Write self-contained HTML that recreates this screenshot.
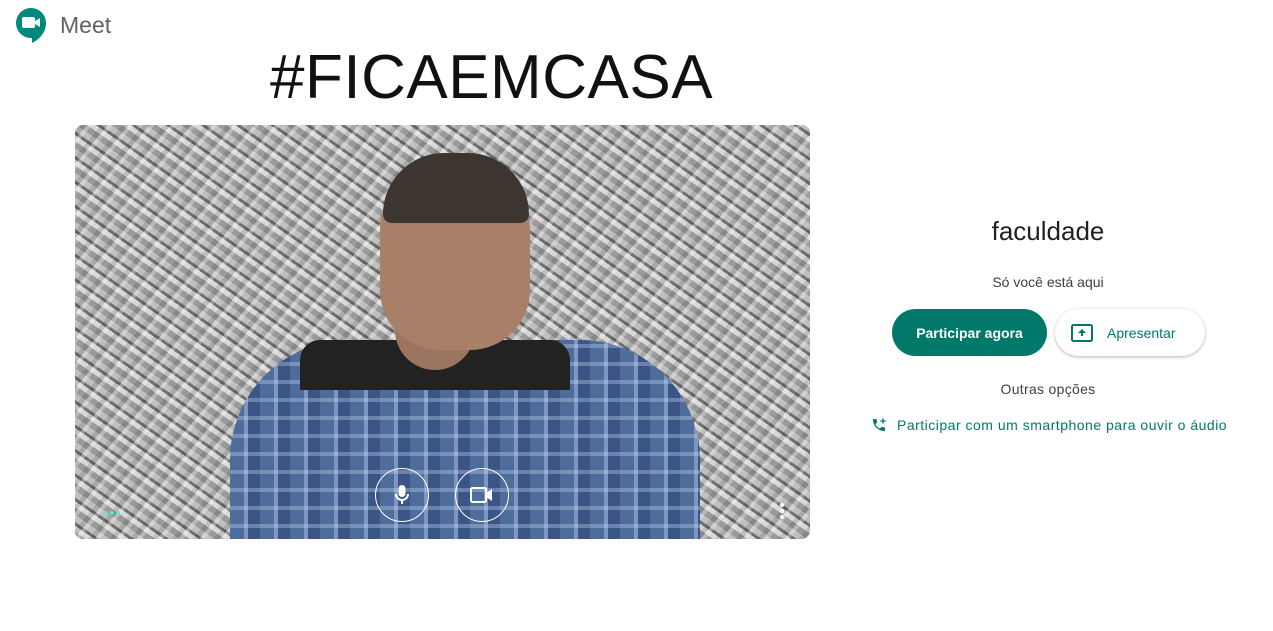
<!DOCTYPE html>
<html><head><meta charset="utf-8">
<style>
body{margin:0;width:1273px;height:631px;background:#fff;font-family:"Liberation Sans",sans-serif;position:relative;overflow:hidden}
.abs{position:absolute}
.video{left:75px;top:125px;width:735px;height:414px;border-radius:8px;overflow:hidden;
background:repeating-linear-gradient(35deg,#9a9a9a 0 6px,#d8d8d8 6px 11px,#707070 11px 14px,#c0c0c0 14px 20px),#a5a5a5}
.video:before{content:"";position:absolute;inset:0;background:repeating-linear-gradient(-50deg,rgba(255,255,255,.3) 0 4px,rgba(0,0,0,.12) 4px 9px,transparent 9px 16px)}
.btnc{width:54px;height:54px;border:1.5px solid #fff;border-radius:50%;box-sizing:border-box;display:flex;align-items:center;justify-content:center}
.d{width:4px;height:4px;border-radius:50%;display:inline-block;margin-right:2px}
</style></head><body>
<svg class="abs" style="left:15px;top:7px" width="32" height="36" viewBox="0 0 32 36">
<path d="M16 1a15 15 0 1 0 0 30h1v5c8-4 14-11 14-20A15 15 0 0 0 16 1z" fill="#00897b"/>
<rect x="7" y="10" width="13" height="11" rx="2" fill="#fff"/><path d="M20 14l5-3v9l-5-3z" fill="#fff"/>
</svg>
<div class="abs" style="left:60px;top:12px;font-size:23px;color:#5f6368">Meet</div>
<div class="abs" style="left:270px;top:42px;font-size:62px;color:#111;letter-spacing:0.5px">#FICAEMCASA</div>
<div class="abs video">
 <div class="abs" style="left:155px;top:215px;width:470px;height:220px;background:repeating-linear-gradient(90deg,#4e6c9c 0 14px,#7d97c2 14px 18px,#3b5587 18px 30px),#4a6696;border-radius:120px 120px 0 0"></div>
 <div class="abs" style="left:155px;top:215px;width:470px;height:220px;background:repeating-linear-gradient(0deg,transparent 0 14px,rgba(200,215,240,.35) 14px 18px);border-radius:120px 120px 0 0"></div>
 <div class="abs" style="left:225px;top:215px;width:270px;height:50px;background:#222;border-radius:20px 20px 0 0"></div>
 <div class="abs" style="left:320px;top:205px;width:80px;height:40px;background:#9b7560;border-radius:0 0 40px 40px"></div>
 <div class="abs" style="left:305px;top:35px;width:150px;height:190px;background:#a88068;border-radius:70px 70px 60px 60px"></div>
 <div class="abs" style="left:308px;top:28px;width:146px;height:70px;background:#3c3530;border-radius:70px 70px 10px 10px"></div>
 <div class="abs btnc" style="left:300px;top:343px"><svg width="16" height="22" viewBox="0 0 16 22"><rect x="4.5" y="1" width="7" height="12" rx="3.5" fill="#fff"/><path d="M2 10a6 6 0 0 0 12 0M8 16v4" stroke="#fff" stroke-width="2" fill="none"/></svg></div>
 <div class="abs btnc" style="left:380px;top:343px"><svg width="24" height="16" viewBox="0 0 24 16"><rect x="1" y="1" width="15" height="14" rx="1.5" stroke="#fff" stroke-width="2" fill="none"/><path d="M16 6l6-4v12l-6-4z" fill="#fff"/></svg></div>
 <div class="abs" style="left:29px;top:386px;line-height:0"><span class="d" style="background:#6fe0d0"></span><span class="d" style="background:#6fe0d0"></span><span class="d" style="background:#6fe0d0"></span></div>
 <div class="abs" style="left:705px;top:378px;width:4px"><div style="width:4px;height:4px;background:#fff;border-radius:50%;margin-bottom:2px"></div><div style="width:4px;height:4px;background:#fff;border-radius:50%;margin-bottom:2px"></div><div style="width:4px;height:4px;background:#fff;border-radius:50%"></div></div>
</div>
<div class="abs" style="left:948px;top:216px;width:200px;text-align:center;font-size:26px;color:#202124">faculdade</div>
<div class="abs" style="left:948px;top:274px;width:200px;text-align:center;font-size:14px;color:#3c4043">Só você está aqui</div>
<div class="abs" style="left:892px;top:309px;width:155px;height:47px;border-radius:24px;background:#00796b;color:#fff;font-weight:bold;font-size:14px;display:flex;align-items:center;justify-content:center">Participar agora</div>
<div class="abs" style="left:1055px;top:309px;width:150px;height:47px;border-radius:24px;background:#fff;box-shadow:0 1px 3px rgba(0,0,0,.3);color:#00796b;font-size:14px;display:flex;align-items:center;box-sizing:border-box;padding-left:16px">
<svg width="22" height="18" viewBox="0 0 22 18" style="margin-right:14px"><rect x="1" y="1" width="20" height="16" rx="1.5" stroke="#00796b" stroke-width="2" fill="none"/><path d="M11 5l-4 4h3v3h2V9h3z" fill="#00796b"/></svg>Apresentar</div>
<div class="abs" style="left:948px;top:381px;width:200px;text-align:center;font-size:14px;color:#3c4043;letter-spacing:0.3px">Outras opções</div>
<svg class="abs" style="left:871px;top:417px" width="16" height="16" viewBox="0 0 24 24"><path d="M6.6 10.8c1.4 2.8 3.8 5.1 6.6 6.6l2.2-2.2c.3-.3.7-.4 1-.2 1.1.4 2.3.6 3.6.6.6 0 1 .4 1 1V20c0 .6-.4 1-1 1C10.6 21 3 13.4 3 4c0-.6.4-1 1-1h3.5c.6 0 1 .4 1 1 0 1.3.2 2.5.6 3.6.1.3 0 .7-.2 1z" fill="#00796b"/><path d="M17 2v3h-3v2h3v3h2V7h3V5h-3V2z" fill="#00796b"/></svg>
<div class="abs" style="left:897px;top:417px;font-size:14px;color:#00796b;letter-spacing:0.5px">Participar com um smartphone para ouvir o áudio</div>
</body></html>
